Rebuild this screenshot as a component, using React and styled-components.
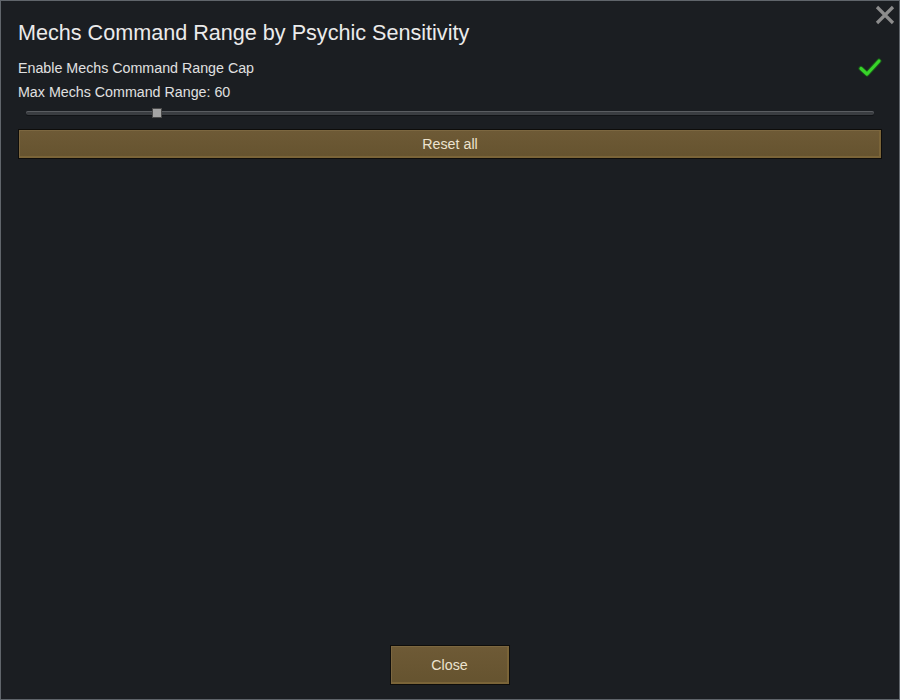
import React from 'react';
import styled, { createGlobalStyle } from 'styled-components';

const GlobalStyle = createGlobalStyle`
  html, body {
    margin: 0;
    padding: 0;
    background: #1b1e22;
  }
  body {
    font-family: "Liberation Sans", Arial, sans-serif;
  }
`;

const Window = styled.div`
  box-sizing: border-box;
  width: 900px;
  height: 700px;
  background: #1b1e22;
  border: 1px solid #60656b;
  display: flex;
  flex-direction: column;
  padding: 17px 17px 14px 17px;
  position: relative;
  color: #e6e6e6;
`;

const CloseX = styled.button`
  position: absolute;
  top: 2px;
  right: 2px;
  width: 24px;
  height: 24px;
  padding: 0;
  border: none;
  background: none;
  cursor: pointer;
`;

const Title = styled.h1`
  margin: 0;
  font-size: 21.6px;
  font-weight: normal;
  line-height: 30px;
  color: #ebebeb;
`;

const OptionRow = styled.div`
  display: flex;
  align-items: center;
  justify-content: space-between;
  height: 24px;
  font-size: 14.25px;
  color: #e0e0e0;
  margin-top: ${p => p.$first ? '8px' : '0'};
`;

const SliderTrack = styled.div`
  position: relative;
  height: 4px;
  margin: 7px 8px 0 8px;
  background: #3a3d41;
  border-radius: 2px;
  box-shadow: inset 0 1px 0 #5a5d61, 0 1px 0 #111316;
`;

const SliderThumb = styled.div`
  position: absolute;
  top: -3px;
  width: 10px;
  height: 10px;
  margin-left: -5px;
  background: #a4a4a4;
  border: 1px solid #4a4a4a;
  box-sizing: border-box;
`;

const WoodButton = styled.button`
  box-sizing: border-box;
  font-family: "Liberation Sans", Arial, sans-serif;
  font-size: 14.25px;
  color: #ece3cf;
  background: linear-gradient(to bottom, #6e5a36, #65532f);
  border: 1px solid #0e0d0b;
  box-shadow: inset 1px 1px 0 #7c6740, inset -2px -2px 0 #7a6438;
  cursor: pointer;
  padding: 0;
`;

const ResetButton = styled(WoodButton)`
  width: 100%;
  height: 30px;
  margin-top: 14px;
`;

const Spacer = styled.div`
  flex: 1;
`;

const Footer = styled.div`
  display: flex;
  justify-content: center;
`;

const CloseButton = styled(WoodButton)`
  width: 120px;
  height: 40px;
  margin-right: 1px;
`;

const CheckIcon = () => (
  <svg width="24" height="20" viewBox="0 0 24 20">
    <path d="M3 10.5 L9 16 L21 3" fill="none" stroke="#1a5a1a" strokeWidth="5" strokeLinecap="round" strokeLinejoin="round" />
    <path d="M3 10.5 L9 16 L21 3" fill="none" stroke="#38d32a" strokeWidth="3.2" strokeLinecap="round" strokeLinejoin="round" />
  </svg>
);

const XIcon = () => (
  <svg width="24" height="24" viewBox="0 0 24 24">
    <path d="M4 4 L20 20 M20 4 L4 20" stroke="#8c8c8c" strokeWidth="3.2" />
  </svg>
);

export default function App() {
  const value = 60;
  const pct = (value / 500) * 100;

  return (
    <>
      <GlobalStyle />
      <Window>
        <CloseX aria-label="close"><XIcon /></CloseX>
        <Title>Mechs Command Range by Psychic Sensitivity</Title>
        <OptionRow $first>
          <span>Enable Mechs Command Range Cap</span>
          <CheckIcon />
        </OptionRow>
        <OptionRow>
          <span>Max Mechs Command Range: {value}</span>
        </OptionRow>
        <SliderTrack>
          <SliderThumb style={{ left: `${pct + 3.5}%` }} />
        </SliderTrack>
        <ResetButton>Reset all</ResetButton>
        <Spacer />
        <Footer>
          <CloseButton>Close</CloseButton>
        </Footer>
      </Window>
    </>
  );
}
